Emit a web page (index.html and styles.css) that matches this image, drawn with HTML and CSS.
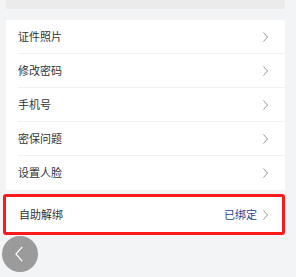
FILE: index.html
```html
<!DOCTYPE html>
<html lang="zh">
<head>
<meta charset="utf-8">
<link rel="stylesheet" href="styles.css">
</head>
<body>
<div class="page">
  <div class="topbar"></div>
  <div class="card">
    <div class="row"><span class="label">证件照片</span><svg class="chev" viewBox="0 0 5 10"><path d="M0.5 0.5 L4.5 5 L0.5 9.5" /></svg></div>
    <div class="row"><span class="label">修改密码</span><svg class="chev" viewBox="0 0 5 10"><path d="M0.5 0.5 L4.5 5 L0.5 9.5" /></svg></div>
    <div class="row"><span class="label">手机号</span><svg class="chev" viewBox="0 0 5 10"><path d="M0.5 0.5 L4.5 5 L0.5 9.5" /></svg></div>
    <div class="row"><span class="label">密保问题</span><svg class="chev" viewBox="0 0 5 10"><path d="M0.5 0.5 L4.5 5 L0.5 9.5" /></svg></div>
    <div class="row last"><span class="label">设置人脸</span><svg class="chev" viewBox="0 0 5 10"><path d="M0.5 0.5 L4.5 5 L0.5 9.5" /></svg></div>
  </div>
  <div class="highlight">
    <span class="label">自助解绑</span>
    <span class="right"><span class="status">已绑定</span><svg class="chev" viewBox="0 0 5 10"><path d="M0.5 0.5 L4.5 5 L0.5 9.5" /></svg></span>
  </div>
  <div class="back"><svg viewBox="0 0 8 16"><path d="M7.2 0.8 L0.9 8 L7.2 15.2" /></svg></div>
</div>
</body>
</html>
```
FILE: styles.css
```css
html, body {
  margin: 0;
  padding: 0;
  background: #f3f4f6;
}
.page {
  position: relative;
  width: 296px;
  height: 277px;
  overflow: hidden;
  font-family: "Noto Sans CJK SC", "Noto Sans", sans-serif;
  font-size: 11px;
  color: #333;
}
.topbar {
  margin-left: 6px;
  width: 279px;
  height: 9px;
  background: #ebebeb;
}
.card {
  margin-top: 11px;
  margin-left: 6px;
  width: 279px;
  background: #fff;
}
.row {
  margin-left: 12px;
  height: 33px;
  border-bottom: 1px solid #f1f1f1;
  display: flex;
  align-items: center;
  justify-content: space-between;
  padding-right: 17px;
}
.row.last {
  border-bottom: 1px solid #fff;
}
.label {
  line-height: 1;
}
.chev {
  width: 5px;
  height: 10px;
  display: block;
}
.chev path {
  fill: none;
  stroke: #8a8a8a;
  stroke-width: 0.9;
}
.highlight {
  margin-top: 4px;
  margin-left: 3px;
  width: 249px;
  height: 35px;
  border: 3px solid #fb1b1b;
  border-radius: 3px;
  background: #fff;
  display: flex;
  align-items: center;
  justify-content: space-between;
  padding-left: 13px;
  padding-right: 14px;
}
.right {
  display: flex;
  align-items: center;
  gap: 6px;
}
.status {
  color: #2b3f8f;
  line-height: 1;
}
.back {
  position: absolute;
  left: 2px;
  top: 236px;
  width: 36px;
  height: 36px;
  border-radius: 50%;
  background: #9b9b9b;
  display: flex;
  align-items: center;
  justify-content: center;
}
.back svg {
  width: 8px;
  height: 16px;
  margin-left: -2px;
}
.back path {
  fill: none;
  stroke: #fff;
  stroke-width: 1.2;
}
```
